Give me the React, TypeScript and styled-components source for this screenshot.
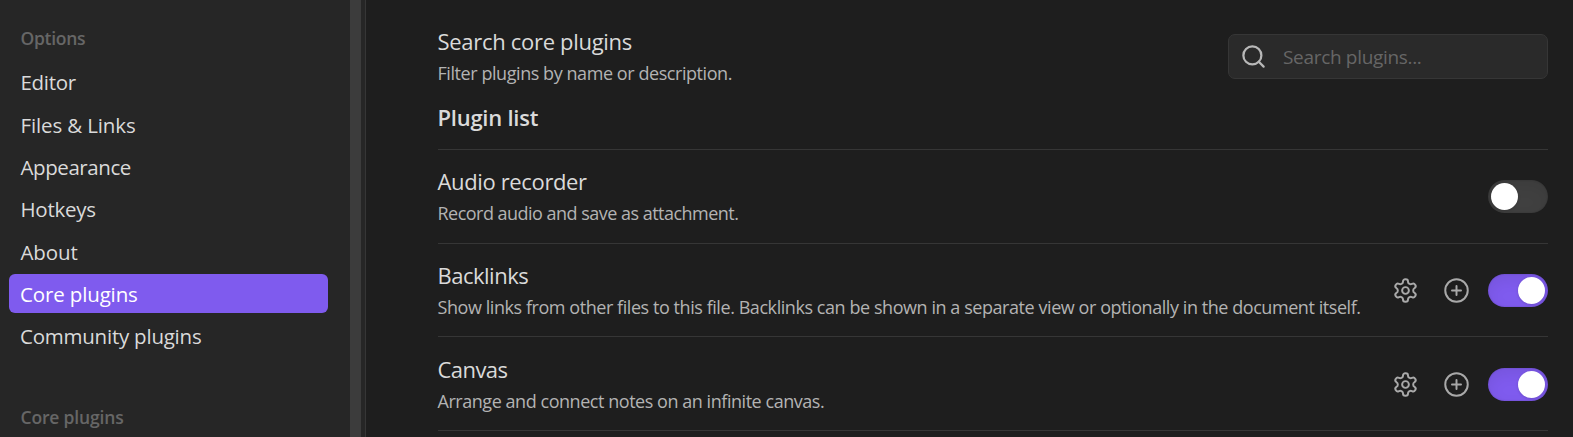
import React from 'react';
import styled, { createGlobalStyle } from 'styled-components';

const GlobalStyle = createGlobalStyle`
  * { box-sizing: border-box; }
  body {
    margin: 0;
    overflow: hidden;
    background: #1e1e1e;
    color: #dadada;
    font-family: "Open Sans", "Noto Sans", sans-serif;
  }
`;

const Layout = styled.div`
  display: flex;
  width: 100%;
  height: 437px;
  overflow: hidden;
`;

const Sidebar = styled.aside`
  display: flex;
  flex: 0 0 366px;
  background: #262626;
  border-right: 1px solid #363636;
`;

const SidebarScroll = styled.nav`
  flex: 0 0 350px;
  height: 437px;
  overflow: hidden;
  padding: 25px 22px 0 9px;
`;

const Scrollbar = styled.div`
  width: 11px;
  background: #3c3c3c;
`;

const NavGroup = styled.section`
  margin-bottom: 48.5px;
`;

const NavHeading = styled.div<{ $tracking: number }>`
  padding-left: 11.5px;
  margin-bottom: 10.4px;
  color: #666;
  font-size: 17.5px;
  font-weight: 600;
  line-height: 27px;
  letter-spacing: ${(p) => p.$tracking}px;
  white-space: nowrap;
`;

const NavList = styled.div`
  display: flex;
  flex-direction: column;
  gap: 3.3px;
`;

const NavItem = styled.div<{ $active?: boolean; $tracking: number; $inset: number }>`
  height: 39px;
  padding-left: ${(p) => p.$inset}px;
  border-radius: 6px;
  background: ${(p) => (p.$active ? '#7f5bee' : 'transparent')};
  color: ${(p) => (p.$active ? '#fff' : '#dadada')};
  font-size: 20.5px;
  line-height: 40px;
  letter-spacing: ${(p) => p.$tracking}px;
  white-space: nowrap;
`;

const Content = styled.main`
  flex: 1;
  min-width: 0;
  padding: 26.5px 25px 0 71.5px;
`;

const Setting = styled.div`
  display: flex;
  align-items: center;
  justify-content: space-between;
  height: 59.75px;
`;

const PluginRow = styled(Setting)`
  height: 93.75px;
  border-top: 1px solid #363636;
`;

const ListEnd = styled.div`
  height: 1px;
  background: #363636;
`;

const Info = styled.div<{ $gap?: number }>`
  display: flex;
  flex-direction: column;
  gap: ${(p) => p.$gap ?? 3.75}px;
  margin-bottom: -1px;
`;

const Name = styled.div<{ $tracking: number }>`
  font-size: 22px;
  line-height: 30px;
  letter-spacing: ${(p) => p.$tracking}px;
  white-space: nowrap;
`;

const Description = styled.div<{ $tracking: number }>`
  color: #b3b3b3;
  font-size: 18px;
  line-height: 27px;
  letter-spacing: ${(p) => p.$tracking}px;
  white-space: nowrap;
`;

const ListHeading = styled(Name)`
  margin: 15.5px 0 17px;
  font-weight: 600;
`;

const SearchBox = styled.div`
  display: flex;
  align-items: center;
  gap: 16px;
  width: 320px;
  height: 45px;
  padding-left: 11px;
  border: 1px solid #363636;
  border-radius: 7px;
  background: #2a2a2a;
  color: #b8b8b8;
`;

const SearchInput = styled.input`
  width: 240px;
  padding: 2px 0 0;
  border: 0;
  outline: 0;
  background: transparent;
  color: #dadada;
  font: 400 19px "Open Sans", "Noto Sans", sans-serif;
  letter-spacing: -0.32px;
  &::placeholder { color: #666; opacity: 1; }
`;

const Controls = styled.div`
  display: flex;
  align-items: center;
  padding-top: 0.75px;
`;

const IconButton = styled.button<{ $gap: number }>`
  display: flex;
  margin: 0 ${(p) => p.$gap}px 0 0;
  padding: 0;
  border: 0;
  background: none;
  color: #a9a9a9;
`;

const Toggle = styled.div<{ $on: boolean }>`
  display: flex;
  align-items: center;
  justify-content: ${(p) => (p.$on ? 'flex-end' : 'flex-start')};
  width: 60px;
  height: 33px;
  padding: 3px;
  border-radius: 17px;
  background: ${(p) => (p.$on ? '#7f5bee' : '#404040')};
  box-shadow: inset 0 6px 15px rgba(0, 0, 0, 0.07), inset 0 0 2px rgba(0, 0, 0, 0.21);
`;

const Thumb = styled.div`
  width: 27px;
  height: 27px;
  border-radius: 50%;
  background: #fff;
  box-shadow: 0 1px 3px rgba(0, 0, 0, 0.15);
`;

const Icon = ({ weight = 1.75, children }: { weight?: number; children: React.ReactNode }) => (
  <svg width="27" height="27" viewBox="0 0 24 24" fill="none" stroke="currentColor"
    strokeWidth={weight} strokeLinecap="round" strokeLinejoin="round">
    {children}
  </svg>
);

const GearIcon = () => (
  <Icon>
    <path d="M12.22 2h-.44a2 2 0 0 0-2 2v.18a2 2 0 0 1-1 1.73l-.43.25a2 2 0 0 1-2 0l-.15-.08a2 2 0 0 0-2.73.73l-.22.38a2 2 0 0 0 .73 2.73l.15.1a2 2 0 0 1 1 1.72v.51a2 2 0 0 1-1 1.74l-.15.09a2 2 0 0 0-.73 2.73l.22.38a2 2 0 0 0 2.73.73l.15-.08a2 2 0 0 1 2 0l.43.25a2 2 0 0 1 1 1.73V20a2 2 0 0 0 2 2h.44a2 2 0 0 0 2-2v-.18a2 2 0 0 1 1-1.73l.43-.25a2 2 0 0 1 2 0l.15.08a2 2 0 0 0 2.73-.73l.22-.39a2 2 0 0 0-.73-2.73l-.15-.08a2 2 0 0 1-1-1.74v-.5a2 2 0 0 1 1-1.74l.15-.09a2 2 0 0 0 .73-2.73l-.22-.38a2 2 0 0 0-2.73-.73l-.15.08a2 2 0 0 1-2 0l-.43-.25a2 2 0 0 1-1-1.73V4a2 2 0 0 0-2-2z" />
    <circle cx="12" cy="12" r="3" />
  </Icon>
);

const PlusCircleIcon = () => (
  <Icon>
    <circle cx="12" cy="12" r="10" />
    <path d="M8 12h8M12 8v8" />
  </Icon>
);

const SearchIcon = () => (
  <Icon weight={2}>
    <circle cx="11" cy="11" r="8" />
    <path d="m21 21-4.3-4.3" />
  </Icon>
);

const navItems = [
  { label: 'Editor', tracking: -0.29, inset: 11.5 },
  { label: 'Files & Links', tracking: -0.13, inset: 11.5 },
  { label: 'Appearance', tracking: -0.42, inset: 11.5 },
  { label: 'Hotkeys', tracking: -0.28, inset: 11.5 },
  { label: 'About', tracking: -0.1, inset: 11.5 },
  { label: 'Core plugins', tracking: -0.14, inset: 11, active: true },
  { label: 'Community plugins', tracking: -0.23, inset: 11 },
];

const plugins = [
  { name: 'Audio recorder', nameTracking: -0.36, text: 'Record audio and save as attachment.', textTracking: -0.52, on: false },
  { name: 'Backlinks', nameTracking: -0.5, text: 'Show links from other files to this file. Backlinks can be shown in a separate view or optionally in the document itself.', textTracking: -0.437, on: true },
  { name: 'Canvas', nameTracking: -0.558, text: 'Arrange and connect notes on an infinite canvas.', textTracking: -0.455, on: true },
];

export default function App() {
  return (
    <>
      <GlobalStyle />
      <Layout>
        <Sidebar>
          <SidebarScroll>
            <NavGroup>
              <NavHeading $tracking={-0.3}>Options</NavHeading>
              <NavList>
                {navItems.map((item) => (
                  <NavItem key={item.label} $active={item.active} $tracking={item.tracking} $inset={item.inset}>
                    {item.label}
                  </NavItem>
                ))}
              </NavList>
            </NavGroup>
            <NavHeading $tracking={-0.17}>Core plugins</NavHeading>
          </SidebarScroll>
          <Scrollbar />
        </Sidebar>
        <Content>
          <Setting>
            <Info $gap={3.9}>
              <Name $tracking={-0.3}>Search core plugins</Name>
              <Description $tracking={-0.435}>Filter plugins by name or description.</Description>
            </Info>
            <SearchBox>
              <SearchIcon />
              <SearchInput placeholder="Search plugins..." />
            </SearchBox>
          </Setting>
          <ListHeading $tracking={-0.24}>Plugin list</ListHeading>
          {plugins.map((plugin) => (
            <PluginRow key={plugin.name}>
              <Info>
                <Name $tracking={plugin.nameTracking}>{plugin.name}</Name>
                <Description $tracking={plugin.textTracking}>{plugin.text}</Description>
              </Info>
              <Controls>
                {plugin.on && (
                  <>
                    <IconButton $gap={24} aria-label="Options"><GearIcon /></IconButton>
                    <IconButton $gap={18} aria-label="Hotkeys"><PlusCircleIcon /></IconButton>
                  </>
                )}
                <Toggle $on={plugin.on}><Thumb /></Toggle>
              </Controls>
            </PluginRow>
          ))}
          <ListEnd />
        </Content>
      </Layout>
    </>
  );
}
